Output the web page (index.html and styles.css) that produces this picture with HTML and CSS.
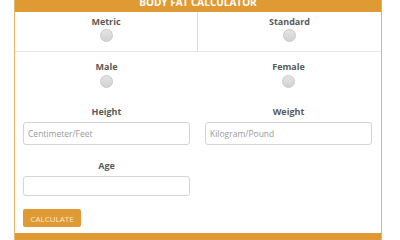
FILE: index.html
```html
<!DOCTYPE html>
<html lang="en">
<head>
    <meta charset="UTF-8">
    <meta name="viewport" content="width=device-width, initial-scale=1.0">
    <title>Body Fat Calculator</title>
    <link rel="stylesheet" href="styles.css">
</head>
<body>

<div class="calc">
    <div class="calc-head">
        <h1>BODY FAT CALCULATOR</h1>
    </div>

    <!-- Unit system -->
    <div class="units">
        <label class="unit">
            <span class="label">Metric</span>
            <input type="radio" name="unit" class="radio">
        </label>
        <label class="unit">
            <span class="label">Standard</span>
            <input type="radio" name="unit" class="radio">
        </label>
    </div>

    <form class="calc-form">
        <div class="row gender">
            <label class="field">
                <span class="label">Male</span>
                <input type="radio" name="gender" class="radio">
            </label>
            <label class="field">
                <span class="label">Female</span>
                <input type="radio" name="gender" class="radio">
            </label>
        </div>

        <div class="row">
            <div class="field">
                <label class="label" for="height">Height</label>
                <input type="text" id="height" class="text-input" placeholder="Centimeter/Feet">
            </div>
            <div class="field">
                <label class="label" for="weight">Weight</label>
                <input type="text" id="weight" class="text-input" placeholder="Kilogram/Pound">
            </div>
        </div>

        <div class="row">
            <div class="field">
                <label class="label" for="age">Age</label>
                <input type="text" id="age" class="text-input age">
            </div>
        </div>

        <button type="button" class="calc-btn">CALCULATE</button>
    </form>

    <div class="calc-foot"></div>
</div>

</body>
</html>
```

FILE: styles.css
```css
body {
    margin: 0;
    padding: 0;
    background-color: #fff;
    font-family: 'Open Sans', sans-serif;
    color: #555;
}

.calc {
    width: 366px;
    margin-left: 14px;
    border-left: 1px solid #e2b66c;
    border-right: 1px solid #cdbb6a;
    background: #fff;
}

.calc-head {
    height: 12px;
    overflow: hidden;
    background-color: #df9a33;
    text-align: center;
}

.calc-head h1 {
    margin: -5px 0 0;
    font-size: 10px;
    line-height: 14px;
    font-weight: bold;
    color: #fff;
}

.units {
    display: grid;
    grid-template-columns: 1fr 1fr;
    border-bottom: 1px solid #e6e6e6;
}

.unit {
    display: flex;
    flex-direction: column;
    align-items: center;
    height: 39px;
    padding-top: 4px;
    box-sizing: border-box;
}

.unit:first-child {
    border-right: 1px solid #dcdcdc;
}

.label {
    display: block;
    font-size: 9px;
    line-height: 11px;
    font-weight: bold;
    color: #5a5a5a;
    text-align: center;
}

.radio {
    appearance: none;
    -webkit-appearance: none;
    width: 13px;
    height: 13px;
    margin: 2px 0 0;
    border: 1px solid #c9c9c9;
    border-radius: 50%;
    background: linear-gradient(#e4e4e4, #d2d2d2);
    box-sizing: border-box;
}

.calc-form {
    padding: 0 9px 0 8px;
}

.row {
    display: grid;
    grid-template-columns: 167px 167px;
    column-gap: 15px;
}

.gender {
    padding-top: 9px;
    margin-bottom: 18px;
}

.field {
    display: flex;
    flex-direction: column;
    align-items: center;
}

.field .label {
    margin-bottom: 5px;
}

.gender .field .label {
    margin-bottom: 0;
}

.gender .radio {
    margin-top: 3px;
}

.row + .row {
    margin-top: 15px;
}

.text-input {
    width: 100%;
    height: 23px;
    box-sizing: border-box;
    border: 1px solid #d4d4d4;
    border-radius: 3px;
    padding: 0 4px;
    font-family: 'Open Sans', sans-serif;
    font-size: 8.5px;
    color: #555;
}

.text-input::placeholder {
    color: #9a9a9a;
}

.text-input.age {
    height: 20px;
}

.calc-btn {
    display: block;
    margin: 13px 0 0;
    width: 58px;
    height: 18px;
    padding: 0;
    border: none;
    border-radius: 2px;
    background-color: #df9a33;
    color: #fbe9cf;
    font-family: 'Open Sans', sans-serif;
    font-size: 8px;
    cursor: pointer;
}

.calc-foot {
    height: 8px;
    margin-top: 6px;
    background-color: #df9a33;
}
```
